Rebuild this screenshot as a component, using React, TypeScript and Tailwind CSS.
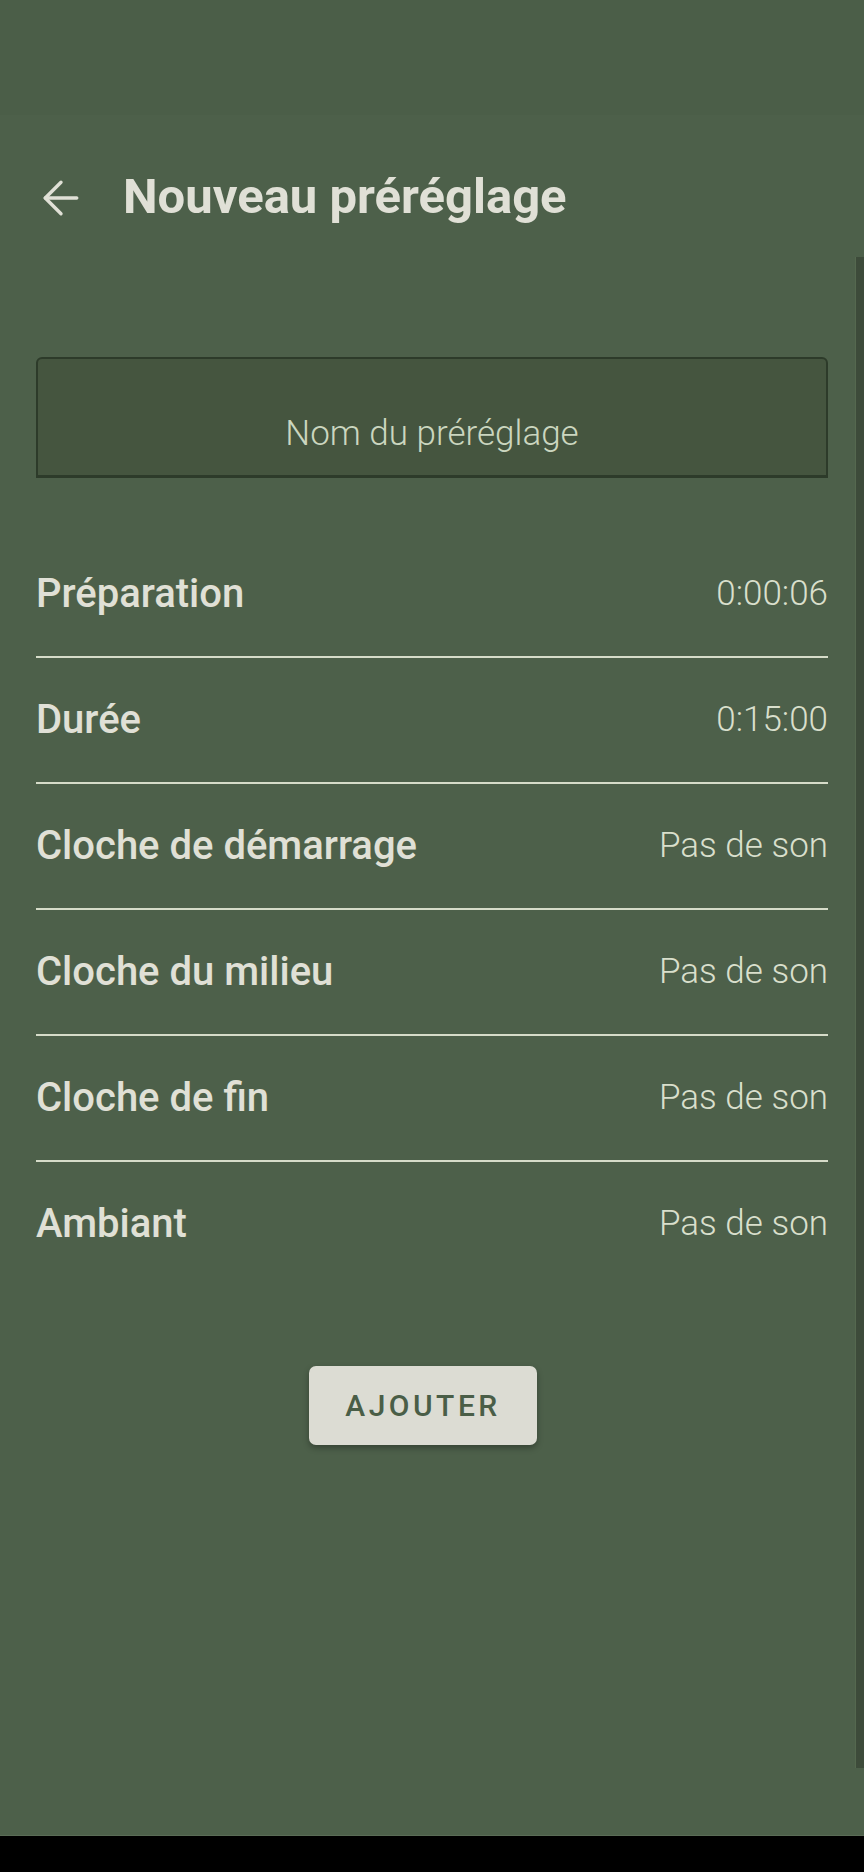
import { ArrowLeft } from "lucide-react";

const rows = [
  { label: "Préparation", value: "0:00:06" },
  { label: "Durée", value: "0:15:00" },
  { label: "Cloche de démarrage", value: "Pas de son" },
  { label: "Cloche du milieu", value: "Pas de son" },
  { label: "Cloche de fin", value: "Pas de son" },
  { label: "Ambiant", value: "Pas de son" },
];

const App = () => {
  return (
    <div
      className="relative w-[864px] h-[1872px] overflow-hidden bg-[#4d604a] flex flex-col"
      style={{ fontFamily: "Roboto, 'Liberation Sans', sans-serif" }}
    >
      {/* status bar */}
      <div className="h-[115px] bg-[#4b5e48] shrink-0" />

      {/* header */}
      <header className="h-[160px] flex items-start pt-[55px] shrink-0">
        <ArrowLeft className="ml-[34px] mt-[1px] w-[54px] h-[54px] text-[#e0e0d6]" strokeWidth={1.5} />
        <h1 className="ml-[35px] text-[49px] leading-[56px] font-bold text-[#e0e0d6] -mt-[1px]">
          Nouveau préréglage
        </h1>
      </header>

      <main className="flex-1 flex flex-col">
        {/* name field */}
        <div className="mx-[36px] mt-[82px] h-[121px] bg-[#45553f] border-2 border-[#2d3b2a] border-b-[3px] rounded-t-[6px] flex items-center justify-center">
          <span className="text-[35px] font-light text-[#cbd6bf] mt-[34px]">
            Nom du préréglage
          </span>
        </div>

        {/* settings list */}
        <div className="mx-[36px] mt-[54px]">
          {rows.map((r, i) => (
            <div
              key={r.label}
              className={
                i < rows.length - 1
                  ? "h-[126px] flex items-center justify-between border-b-2 border-[#d6dcc9]"
                  : "h-[124px] flex items-center justify-between"
              }
            >
              <span className="text-[40px] font-medium text-[#e0e0d6]">{r.label}</span>
              <span className="text-[35px] font-light text-[#d9dfcc]">{r.value}</span>
            </div>
          ))}
        </div>

        <div className="mt-[80px] pl-[309px]">
          <button className="w-[228px] h-[79px] rounded-[7px] bg-[#dcdcd3] shadow-[0_3px_6px_rgba(0,0,0,0.3)] text-[30px] font-medium tracking-[3.5px] text-[#4a5e47]">
            AJOUTER
          </button>
        </div>
      </main>

      {/* scrollbar thumb */}
      <div className="absolute right-0 top-[257px] w-[9px] h-[1511px] bg-[#3d4b3a] border-l border-[#55684f]" />

      {/* navigation bar */}
      <div className="h-[37px] bg-black border-t border-[#5a6c56] shrink-0" />
    </div>
  );
};

export default App;
